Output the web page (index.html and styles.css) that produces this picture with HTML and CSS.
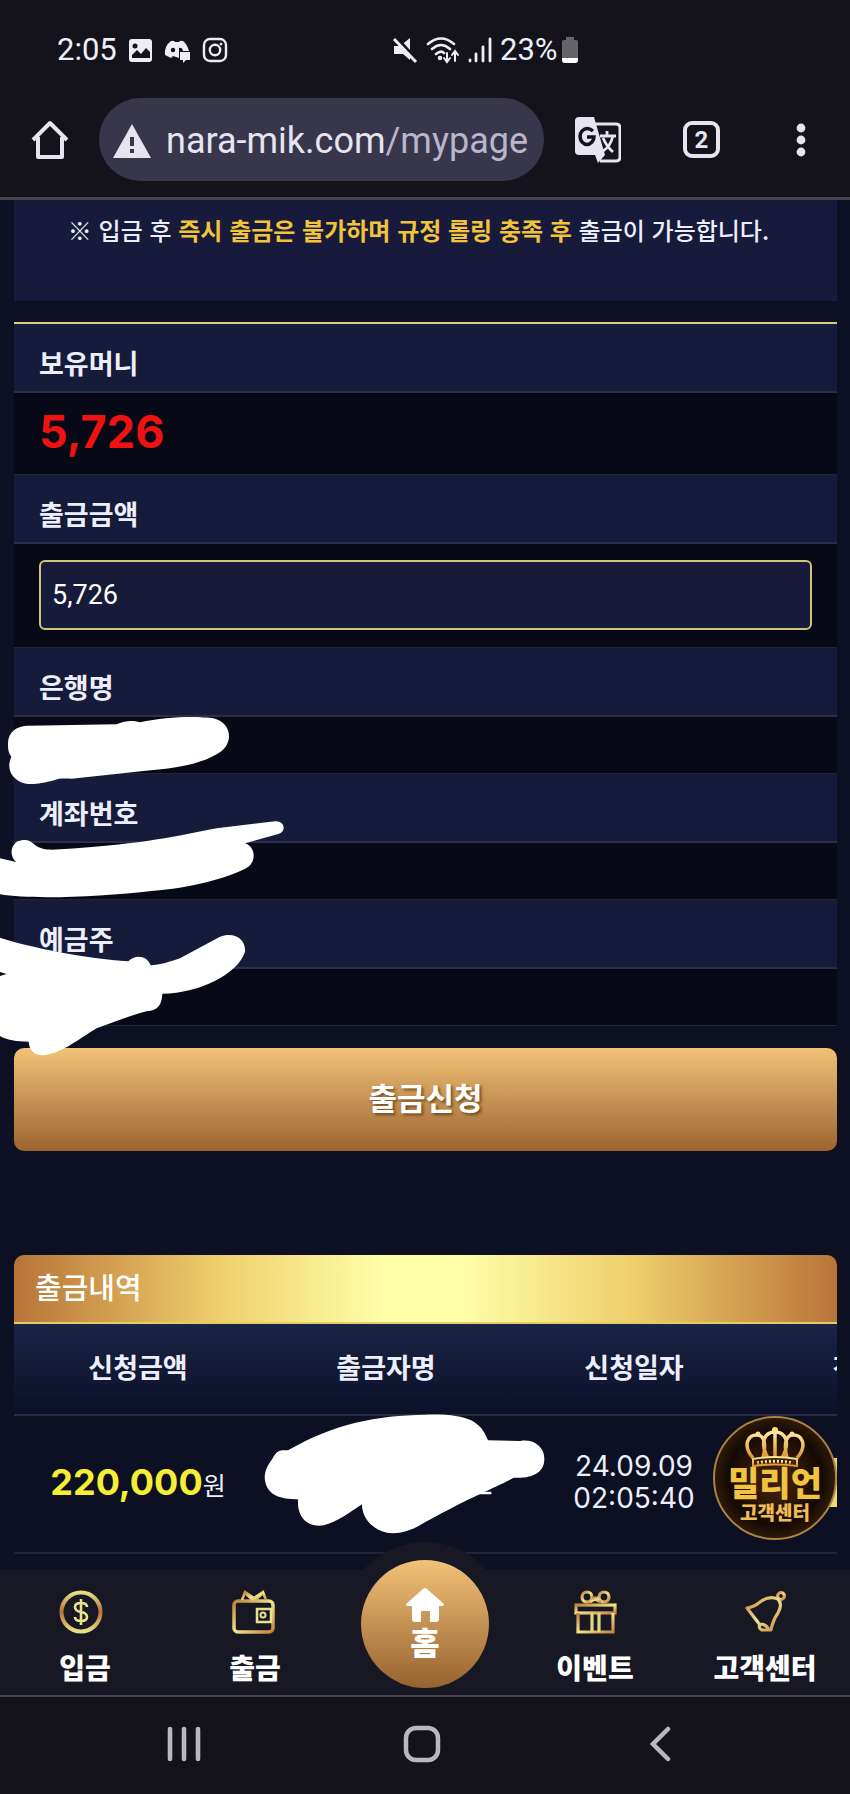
FILE: index.html
```html
<!DOCTYPE html>
<html lang="ko">
<head>
<meta charset="utf-8">
<meta name="viewport" content="width=device-width, initial-scale=1">
<title>출금신청</title>
<link rel="stylesheet" href="styles.css">
</head>
<body>
<svg class="defs" width="0" height="0" aria-hidden="true">
  <defs>
    <linearGradient id="gold" x1="0" y1="0" x2="1" y2="1"><stop offset="0" stop-color="#c07f3c"/><stop offset=".5" stop-color="#efe58a"/><stop offset="1" stop-color="#c58240"/></linearGradient>
    <linearGradient id="ring" x1="0" y1="0" x2="0" y2="1"><stop offset="0" stop-color="#e8df84"/><stop offset=".5" stop-color="#b5713a"/><stop offset="1" stop-color="#e8df84"/></linearGradient>
    <linearGradient id="crown" x1="0" y1="0" x2="0" y2="1"><stop offset="0" stop-color="#ffe9a0"/><stop offset="1" stop-color="#d8942c"/></linearGradient>
  </defs>
</svg>
<header class="chrome">
  <div class="status">
    <div class="status-left">
      <span>2:05</span>
      <svg width="24" height="26" viewBox="0 0 24 26"><rect x="1" y="2" width="23" height="23" rx="3" fill="#eeedf3"/><circle cx="7" cy="9" r="2.500" fill="#14131b"/><path d="M4 21v-3l5-5 4 4 5-6 4 4v6z" fill="#14131b"/></svg>
      <svg width="28" height="26" viewBox="0 0 28 26"><path d="M8 4q3-1 4 1h4q1-2 4-1 4 3 6 10H16v7l-3-1-3-1-2 2-6-3Q1 9 8 4z" fill="#eeedf3"/><circle cx="10" cy="13" r="2.200" fill="#14131b"/><path d="M16 14v-3q3-1 4 3z" fill="#14131b"/><path d="M17 15h10v8h-4l-3 3v-3h-3z" fill="#eeedf3"/></svg>
      <svg width="28" height="28" viewBox="0 0 28 28" fill="none" stroke="#eeedf3" stroke-width="2.400"><rect x="2" y="3" width="22" height="22" rx="6"/><circle cx="13" cy="14" r="5.200"/><circle cx="19" cy="8" r="1" fill="#eeedf3" stroke-width="1"/></svg>
    </div>
    <div class="status-right">
      <svg width="26" height="28" viewBox="0 0 26 28"><path d="M2 10h6l10-8v22l-7-6H2z" fill="#eeedf3"/><path d="M4 1l22 24" stroke="#14131b" stroke-width="3"/><path d="M2 3l22 23" stroke="#eeedf3" stroke-width="3"/></svg>
      <svg width="34" height="28" viewBox="0 0 34 28" fill="none" stroke="#eeedf3" stroke-width="2.600" stroke-linecap="round"><path d="M2 8q13-11 26 0M6 13q9-8 18 0M10 18q5-4 8-1"/><circle cx="14" cy="22" r="1"/><path d="M21 17v8m-3-3l3 4 3-4M29 25v-9m-3 3l3-4 3 4" stroke-width="2"/></svg>
      <svg width="24" height="26" viewBox="0 0 24 26" stroke="#eeedf3" stroke-width="2.800" stroke-linecap="round"><path d="M2 23v1M8 17v7M15 10v14M22 2v22"/></svg>
      <span>23%</span>
      <svg class="battery" width="18" height="28" viewBox="0 0 18 28"><path d="M5 1h8v3h2q2 0 2 2v18q0 3-3 3H4q-3 0-3-3V6q0-2 2-2h2z" fill="#65646b"/><path d="M1 22h16v2q0 3-3 3H4q-3 0-3-3z" fill="#fff"/></svg>
    </div>
  </div>
  <div class="toolbar">
    <button class="tool" aria-label="홈페이지"><svg width="38" height="40" viewBox="0 0 38 40" fill="none" stroke="#e6e4ef" stroke-width="4" stroke-linejoin="round"><path d="M2 20L19 3l17 17M7 17v20h24V17"/></svg></button>
    <div class="url">
      <svg width="38" height="34" viewBox="0 0 38 34"><path d="M19 0l19 34H0z" fill="#e6e4ef"/><path d="M19 13v9M19 25v4" stroke="#38364a" stroke-width="4"/></svg>
      <span>nara-mik.com<span class="path">/mypage</span></span>
    </div>
    <button class="tool translate" aria-label="번역"><svg width="46" height="48" viewBox="0 0 46 48"><path d="M20 8h21q4 0 4 4v29q0 4-4 4H25" fill="none" stroke="#e6e4ef" stroke-width="3"/><path d="M4 1h15l11 38-7 8-3-8H4q-4 0-4-4V5q0-4 4-4z" fill="#e6e4ef"/><path d="M18 15q-6-5-11 0-4 5 0 11 5 5 10 0 2-2 2-5h-7" fill="none" stroke="#14131b" stroke-width="3.500"/><path d="M24 20h17M32 15v5M38 20q-3 11-11 16M27 22q4 9 11 15" fill="none" stroke="#14131b" stroke-width="6" clip-path="inset(0 18px 0 0)"/><path d="M25 20h16M32 15v5M38 20q-3 11-10 15M28 22q4 9 10 14" fill="none" stroke="#e6e4ef" stroke-width="2.800"/></svg></button>
    <button class="tool" aria-label="탭"><span class="tabs">2</span></button>
    <button class="tool menu" aria-label="메뉴"><svg width="10" height="34" viewBox="0 0 10 34" fill="#e6e4ef"><circle cx="5" cy="5" r="4.400"/><circle cx="5" cy="17" r="4.400"/><circle cx="5" cy="29" r="4.400"/></svg></button>
  </div>
</header>
<main>
  <p class="notice">※ 입금 후 <strong>즉시 출금은 불가하며 규정 롤링 충족 후</strong> 출금이 가능합니다.</p>
  <form class="withdraw">
    <div class="name">보유머니</div>
    <div class="value money">5,726</div>
    <label class="name" for="amount">출금금액</label>
    <div class="value field"><input id="amount" type="text" value="5,726"></div>
    <div class="name">은행명</div>
    <div class="value"></div>
    <div class="name">계좌번호</div>
    <div class="value"></div>
    <div class="name">예금주</div>
    <div class="value"></div>
    <svg class="marks" width="425" height="370" viewBox="0 0 1275 1110" fill="#fff">
      <path d="M24 165C22 125 50 108 85 107L350 103C380 90 400 92 420 97C500 78 600 78 640 85C700 100 700 165 655 190C600 225 520 235 430 243L215 266C190 266 180 264 165 270C110 285 80 285 60 275C30 260 20 230 34 200C26 190 24 180 24 165Z"/>
      <path d="M0 505L48 516C30 500 30 470 50 455C75 445 90 450 105 465C125 480 150 480 180 478C400 465 500 445 650 415L825 394C855 392 860 425 835 432L735 460C765 470 770 510 745 530C690 565 560 595 460 602C300 620 100 630 0 613Z"/>
      <path d="M0 743C100 775 260 805 385 814C405 793 440 795 452 826C480 825 510 815 540 805L660 740C700 725 738 745 735 785C715 850 600 910 487 911C485 945 475 960 440 964C380 980 330 1000 290 1015C245 1040 190 1090 130 1096C100 1094 88 1080 86 1055C50 1055 20 1050 0 1038V858L20 852 0 846Z"/>
    </svg>
    <button class="submit" type="submit">출금신청</button>
  </form>
  <section class="history">
    <h2>출금내역</h2>
    <table>
      <thead><tr><th>신청금액</th><th>출금자명</th><th>신청일자</th><th>진행상태</th></tr></thead>
      <tbody><tr><td class="sum"><b>220,000</b>원</td><td></td><td class="date">24.09.09<br>02:05:40</td><td><span class="state"></span></td></tr></tbody>
    </table>
    <svg class="mask" width="284" height="124" viewBox="785 98 852 372" fill="#fff"><path d="M863 210C1000 130 1130 105 1275 103C1400 100 1440 120 1463 180L1560 182C1600 175 1632 200 1632 235C1632 275 1600 295 1540 292C1490 320 1430 340 1275 425C1230 455 1190 462 1160 457C1110 445 1085 410 1085 372C1050 395 1010 425 970 435C920 442 890 410 893 357C840 357 795 345 793 290C795 260 810 245 818 232C828 212 840 208 863 210Z"/><path d="M1425 334h48v8h-62z"/></svg>
  </section>
  <a class="support" href="#support">
    <svg width="60" height="42" viewBox="0 0 60 42" fill="none" stroke="url(#crown)" stroke-width="3.500"><path d="M8 31C-3 18 3 7 13 8c7 1 8 11 5 23M52 31C63 18 57 7 47 8c-7 1-8 11-5 23M23 31C14 15 20 5 30 5s16 10 7 26M30 5v26"/><path d="M8 32q22-4 44 0v7q-22-3-44 0z" fill="#3b2008" stroke-width="2"/><path d="M12 36q18-3 36 0" stroke-dasharray="2 2"/><g fill="#ffe08a" stroke="none"><circle cx="30" cy="3" r="3"/><circle cx="13" cy="7" r="2.500"/><circle cx="47" cy="7" r="2.500"/></g></svg>
    <span class="brand">밀리언</span>
    <span class="desk">고객센터</span>
  </a>
</main>
<nav class="tabbar">
  <a href="#deposit"><svg width="52" height="44" viewBox="0 0 52 44" fill="none"><circle cx="22" cy="22" r="19.500" stroke="url(#ring)" stroke-width="4"/><path d="M28 17q0-4-6-4t-6 4q0 4 6 5t6 5q0 4-6 4t-6-4M22 9v26" stroke="#e8e48c" stroke-width="2.600"/></svg>입금</a>
  <a href="#withdraw"><svg width="46" height="44" viewBox="0 0 46 44" fill="none" stroke="url(#gold)" stroke-width="3.500"><rect x="2" y="11" width="39" height="31" rx="4"/><path d="M10 10l3-8 9 6 9-6 3 8M14 4l8 7 8-7" stroke-width="2.500"/><rect x="25" y="19" width="14" height="13" stroke="#e8e48c" stroke-width="2.500"/><circle cx="31" cy="25" r="2.500" stroke="#e8e48c" stroke-width="2"/></svg>출금</a>
  <a class="home" href="#home"><svg width="38" height="34" viewBox="0 0 38 34"><path d="M17 1q2-2 4 0l17 15q0 2-2 2h-3v13q0 3-3 3h-6V23h-9v11H9q-3 0-3-3V18H2q-2 0-2-2z" fill="#fff"/></svg>홈</a>
  <a href="#event"><svg width="43" height="44" viewBox="0 0 43 44" fill="none" stroke="url(#gold)" stroke-width="3.200"><rect x="2" y="15" width="39" height="8"/><path d="M4 23v19h35V23"/><path d="M18 23v19M25 23v19" stroke="#e0d880"/><circle cx="13" cy="7" r="5"/><circle cx="30" cy="7" r="5"/><path d="M18 8h7M16 12l5-3 6 3"/></svg>이벤트</a>
  <a href="#center"><svg width="43" height="44" viewBox="0 0 43 44" fill="none" stroke="url(#gold)" stroke-width="3.200" stroke-linejoin="round"><path d="M3 18q7-1 13-6 9-7 18-3 5 5 0 14-5 7-7 17h-9q-4-2-2-5zM16 34q6 0 9 6"/><circle cx="37" cy="6" r="3.500"/></svg>고객센터</a>
</nav>
<footer class="system">
  <button aria-label="최근 앱"><svg width="34" height="36" viewBox="0 0 34 36" stroke="#b9b7c2" stroke-width="4.600" stroke-linecap="round"><path d="M3 3v30M17 3v30M31 3v30"/></svg></button>
  <button aria-label="홈"><svg width="38" height="38" viewBox="0 0 38 38" fill="none" stroke="#b9b7c2" stroke-width="4.500"><rect x="3" y="3" width="32" height="32" rx="10"/></svg></button>
  <button aria-label="뒤로"><svg width="22" height="36" viewBox="0 0 22 36" fill="none" stroke="#b9b7c2" stroke-width="4.500" stroke-linecap="round"><path d="M18 3L3 18l15 15"/></svg></button>
</footer>
</body>
</html>
```
FILE: styles.css
```css
* { box-sizing: border-box; }
body {
  margin: 0;
  min-height: 100vh;
  display: flex;
  flex-direction: column;
  background: #0d0f22;
  color: #eceefa;
  font-family: Roboto, "Noto Sans CJK KR", sans-serif;
}
svg { display: block; flex: none; }
button { border: 0; padding: 0; background: none; color: inherit; font: inherit; cursor: pointer; }
a { color: inherit; text-decoration: none; }
.defs { position: absolute; }

.chrome { background: #14131b; border-bottom: 3px solid #44434e; }
.status {
  display: grid;
  grid-template-columns: 335px 1fr;
  padding: 30px 0 0 57px;
  font-size: 31px;
  line-height: 40px;
}
.status-left, .status-right { display: flex; align-items: center; gap: 11px; }
.status-right { gap: 8px; }
.status-right .battery { margin-left: -5px; }
.toolbar { display: flex; align-items: center; padding: 28px 44px 16px 31px; }
.tool { display: grid; place-items: center; color: #e6e4ef; }
.url {
  display: flex;
  flex: 1;
  align-items: center;
  gap: 15px;
  height: 83px;
  margin: 0 31px 0 30px;
  padding: 2px 14px 0;
  border-radius: 42px;
  background: #38364a;
  color: #e6e4ef;
  font-size: 36px;
}
.path { color: #b9b5cc; }
.translate { margin-right: 62px; }
.menu { margin-left: 76px; }
.tabs {
  display: grid;
  place-items: center;
  width: 37px;
  height: 37px;
  border: 4px solid #e6e4ef;
  border-radius: 9px;
  font-size: 24px;
  font-weight: 700;
}

main { flex: 1; position: relative; padding: 0 13px 0 14px; }
.notice {
  margin: 0 0 21px;
  padding: 12px 34px 53px 20px;
  background: #171a3a;
  font-family: "Noto Sans CJK KR", sans-serif;
  font-size: 24px;
  font-weight: 500;
  line-height: 36px;
  text-align: center;
  white-space: nowrap;
}
.notice strong { color: #f2c43a; }

.withdraw { position: relative; border-top: 2px solid #d8cd83; font-family: "Noto Sans CJK KR", sans-serif; }
.name {
  display: block;
  padding: 20px 25px 9px;
  border-bottom: 2px solid #2b2d49;
  background: #171b3b;
  font-size: 27px;
  font-weight: 700;
  line-height: 38px;
}
.value { min-height: 57px; border-bottom: 1px solid #23252f; background: #070a16; }
.money {
  padding: 11px 25px 14px;
  color: #ee1212;
  font-family: Inter, sans-serif;
  font-size: 45px;
  font-weight: 700;
  line-height: 56px;
}
.field { padding: 16px 25px 17px; }
.field input {
  display: block;
  width: 100%;
  height: 70px;
  padding: 0 11px;
  border: 2px solid #cfc380;
  border-radius: 6px;
  background: #171a38;
  color: #fff;
  font: 27px Roboto, sans-serif;
}
.submit {
  display: block;
  width: 100%;
  height: 103px;
  margin-top: 22px;
  padding-bottom: 6px;
  border-radius: 10px;
  background: linear-gradient(#f1c277, #9c6430);
  color: #fff;
  font-size: 31px;
  font-weight: 700;
  text-shadow: 2px 2px 3px rgba(60, 30, 0, .6);
}
.marks { position: absolute; left: -14px; top: 366px; pointer-events: none; }

.history { position: relative; margin-top: 104px; overflow: hidden; border-radius: 10px 10px 0 0; font-family: "Noto Sans CJK KR", sans-serif; }
.history h2 {
  margin: 0;
  padding: 11px 21px 16px;
  border-bottom: 2px solid #e3cc6c;
  background: linear-gradient(90deg, #b87438, #efcf6c 25%, #ffffa8 45%, #ffffa8 54%, #efcf6c 75%, #b87438);
  color: #fff;
  font-size: 29px;
  font-weight: 500;
  line-height: 40px;
}
.history table { width: 992px; table-layout: fixed; border-collapse: collapse; }
.history thead { background: linear-gradient(#1a2445, #0c1028); }
.history th { height: 91px; padding: 0 0 6px; border-bottom: 2px solid #2b2d42; font-size: 27px; font-weight: 700; }
.history td { height: 138px; padding: 0 0 4px; border-bottom: 2px solid #22243a; text-align: center; }
.sum { font-size: 25px; }
.sum b { color: #f5ee36; font-family: Inter, sans-serif; font-size: 36px; }
.date { font-family: Inter, sans-serif; font-size: 28px; line-height: 32px; }
.state { display: block; width: 106px; height: 49px; margin: 0 auto; background: #f0d872; }
.mask { position: absolute; left: 248px; top: 158px; }

.support {
  position: absolute;
  right: 13px;
  bottom: 30px;
  width: 124px;
  height: 124px;
  display: flex;
  flex-direction: column;
  align-items: center;
  padding-top: 9px;
  border: 2px solid #a88440;
  border-radius: 50%;
  background: radial-gradient(circle, #3a1d08 20%, #140903 55%, #5c3a14);
  font-family: "Noto Sans CJK KR", sans-serif;
  font-weight: 900;
}
.brand { margin-top: -5px; color: #f0c440; font-size: 34px; line-height: 35px; }
.desk { color: #f0bc58; font-size: 19px; line-height: 25px; }

.tabbar {
  display: grid;
  grid-template-columns: repeat(5, 1fr);
  background: #171824;
  clip-path: inset(-40px 0 0 0);
  color: #fff;
  font-family: "Noto Sans CJK KR", sans-serif;
  font-size: 28px;
  font-weight: 900;
  line-height: 38px;
}
.tabbar a { display: flex; flex-direction: column; align-items: center; gap: 14px; padding: 20px 0 9px; }
.tabbar .home {
  justify-self: center;
  width: 128px;
  height: 128px;
  gap: 0;
  margin: -10px 0 0;
  padding: 28px 0 0;
  border-radius: 50%;
  background: linear-gradient(#f1c277, #96622f);
  box-shadow: 0 0 0 18px #171824;
  font-size: 32px;
}
.system {
  display: grid;
  grid-template-columns: 1fr 110px 1fr;
  align-items: center;
  min-height: 99px;
  padding: 0 6px 4px 0;
  border-top: 2px solid #45444f;
  background: #14131b;
}
.system button { display: grid; place-items: center; }
```
